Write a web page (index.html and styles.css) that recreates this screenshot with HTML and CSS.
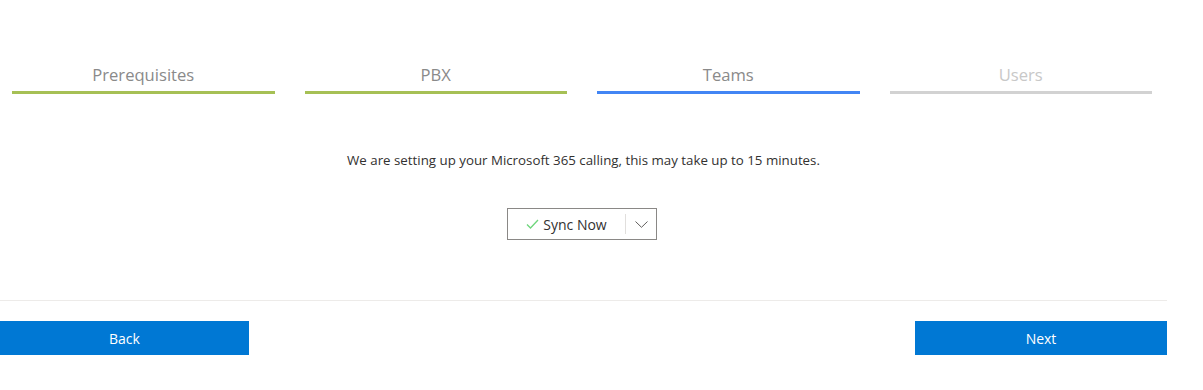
FILE: index.html
```html
<!DOCTYPE html>
<html lang="en">
<head>
  <meta charset="UTF-8" />
  <title>Setup - Teams</title>
  <link rel="stylesheet" href="styles.css">
</head>
<body>
  <div class="wizard">
    <ul class="steps">
      <li class="step done"><span>Prerequisites</span></li>
      <li class="step done"><span>PBX</span></li>
      <li class="step current"><span>Teams</span></li>
      <li class="step todo"><span>Users</span></li>
    </ul>

    <p class="message">We are setting up your Microsoft 365 calling, this may take up to 15 minutes.</p>

    <div class="sync">
      <button class="sync-main">
        <svg class="check" width="13" height="10" viewBox="0 0 13 10">
          <path d="M1 5.5 L4.5 9 L12 1" fill="none" stroke="#6fd67c" stroke-width="1.3"/>
        </svg>
        Sync Now
      </button>
      <span class="sync-sep"></span>
      <button class="sync-more" aria-label="More options">
        <svg width="13" height="7" viewBox="0 0 13 7">
          <path d="M0.5 0.5 L6.5 6.3 L12.5 0.5" fill="none" stroke="#605e5c" stroke-width="1"/>
        </svg>
      </button>
    </div>

    <div class="footer">
      <button class="primary">Back</button>
      <button class="primary next">Next</button>
    </div>
  </div>
</body>
</html>
```

FILE: styles.css
```css
* { margin: 0; padding: 0; box-sizing: border-box; }

body {
  font-family: 'Open Sans', 'Noto Sans', sans-serif;
  background-color: #fff;
  color: #323130;
}

.wizard {
  width: 1167px;
}

/* Step indicator */
.steps {
  display: flex;
  gap: 30px;
  list-style: none;
  width: 1140px;
  margin: 63px 0 0 12px;
}

.step {
  flex: 1;
  text-align: center;
  font-size: 16.6px;
  line-height: 24px;
  color: #8a8a8a;
}

.step::after {
  content: '';
  display: block;
  height: 3px;
  margin-top: 4px;
  background-color: #a6c055;
}

.step.current::after { background-color: #4285f4; }
.step.todo { color: #c8c8c8; }
.step.todo::after { background-color: #d2d2d2; }

.message {
  margin-top: 56px;
  text-align: center;
  font-size: 13.3px;
  line-height: 20px;
}

/* Split button */
.sync {
  display: flex;
  align-items: center;
  width: 150px;
  height: 32px;
  margin: 38px 0 0 507px;
  border: 1px solid #8a8886;
  background: #fff;
}

.sync button {
  border: none;
  background: transparent;
  font-family: inherit;
  color: #323130;
  cursor: pointer;
}

.sync-main {
  flex: 1;
  height: 100%;
  display: flex;
  align-items: center;
  justify-content: center;
  gap: 4px;
  font-size: 14px;
}

.sync-sep {
  width: 1px;
  height: 20px;
  background-color: #e1dfdd;
}

.sync-more {
  width: 30px;
  height: 100%;
  display: flex;
  align-items: center;
  justify-content: center;
}

/* Footer */
.footer {
  display: flex;
  justify-content: space-between;
  margin-top: 60px;
  padding-top: 20px;
  border-top: 1px solid #edebe9;
}

.primary {
  width: 249px;
  height: 34px;
  border: none;
  background-color: #0078d4;
  color: #fff;
  font-family: inherit;
  font-size: 14px;
  cursor: pointer;
}

.primary.next {
  width: 252px;
}
```
